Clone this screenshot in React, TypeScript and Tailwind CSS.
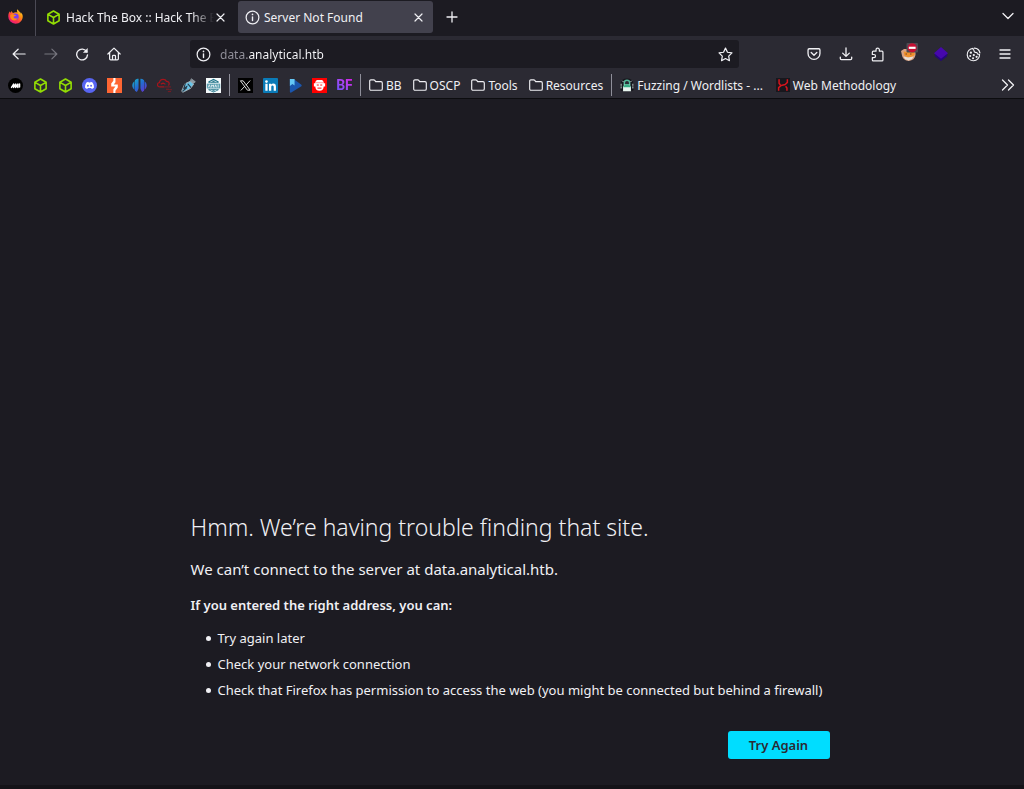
import type { ReactNode } from "react";

type IconProps = { children: ReactNode; className?: string; box?: string };

function Icon({ children, className = "size-[15px]", box = "0 0 16 16" }: IconProps) {
  return (
    <svg
      viewBox={box}
      className={`shrink-0 ${className}`}
      fill="none"
      stroke="currentColor"
      strokeWidth="1.3"
      strokeLinecap="round"
      strokeLinejoin="round"
      aria-hidden="true"
    >
      {children}
    </svg>
  );
}

function FirefoxLogo() {
  return (
    <Icon className="size-[15px]">
      <defs>
        <linearGradient id="fx" x1="1" y1="0" x2="0.2" y2="1">
          <stop offset="0" stopColor="#fff44f" />
          <stop offset="0.35" stopColor="#ff980e" />
          <stop offset="0.7" stopColor="#ff3647" />
          <stop offset="1" stopColor="#e31587" />
        </linearGradient>
      </defs>
      <g stroke="none">
        <path
          fill="url(#fx)"
          d="M15.2 5.6c-.5-1-1.300-2.100-2-2.500.6 1 .8 1.800.9 2.300C13 3 11.200 1.900 9.800.2 9.200 2 9.800 3 10.200 3.700 8 3 6.500 3.500 5.500 4.200 4.700 4 4.300 3.100 4.200 2 3.300 2.500 2.700 3.400 2.400 4.100 1.900 3.700 1.900 2.800 1.900 2.500.9 3.600.3 5.700.3 7.900A7.700 7.700 0 0 0 8 15.700c4.500 0 7.700-3.500 7.700-7.700 0-1-.2-1.800-.5-2.400z"
        />
        <circle cx="7.900" cy="8.300" r="3.500" fill="#7a3cf0" />
        <path fill="#ff8a16" d="M2.500 6.200c1.500-1.200 3-1 4.200-.2.800.1 1.500.2 2 .8-1 1-2.700.8-2.800 2 .8 1.500 3 2 4.500.7-.8 2.300-3.600 3.300-5.800 2.200-2-1-2.700-3.300-2.100-5.500z" />
      </g>
    </Icon>
  );
}

function BoxLogo() {
  return (
    <Icon className="size-[15px] text-[#92dc04]">
      <path strokeWidth="1.700" d="M8 1l6 3.500v7L8 15l-6-3.500v-7zM2.200 4.600L8 8l5.800-3.400M8 8v6.800" />
    </Icon>
  );
}

function InfoIcon() {
  return (
    <Icon>
      <circle cx="8" cy="8" r="6.800" />
      <path d="M8 7.300v4" strokeWidth="1.500" />
      <circle cx="8" cy="4.700" r=".9" fill="currentColor" stroke="none" />
    </Icon>
  );
}

function CloseIcon() {
  return (
    <Icon className="size-[9px]" box="0 0 9 9">
      <path d="M1 1l7 7M8 1l-7 7" strokeWidth="1.200" />
    </Icon>
  );
}

function FolderIcon() {
  return (
    <Icon className="size-[14px]">
      <path d="M.8 12.500v-9c0-.8.500-1.300 1.300-1.300h3.300c.5 0 .9.200 1.200.6l1 1.400h6.100c.9 0 1.500.6 1.500 1.500v6.800c0 .9-.6 1.500-1.500 1.500H2.300c-.9 0-1.500-.6-1.500-1.500z" />
    </Icon>
  );
}

const siteLinks: { name: string; icon: ReactNode }[] = [
  {
    name: "Notes",
    icon: (
      <Icon>
        <circle cx="8" cy="8" r="8" fill="#000" stroke="none" />
        <path d="M3.800 10L6 6.500V10l2.200-3.500V10l2.300-3.500V10M12.300 6.500V9.500" stroke="#fff" strokeWidth="1.600" />
      </Icon>
    ),
  },
  { name: "Hack The Box", icon: <BoxLogo /> },
  { name: "Hack The Box Academy", icon: <BoxLogo /> },
  {
    name: "Discord",
    icon: (
      <Icon>
        <circle cx="8" cy="8" r="8" fill="#5865f2" stroke="none" />
        <path
          fill="#fff"
          stroke="none"
          d="M4.800 4.700l1.900-.6.4.7h1.800l.4-.7 1.900.6c1.200 1.800 1.700 3.600 1.500 5.800-.7.600-1.500.9-2.300 1.100l-.6-1H6.200l-.6 1c-.8-.2-1.600-.5-2.300-1.100-.2-2.200.3-4 1.500-5.800z"
        />
        <circle cx="6.300" cy="8.300" r="1" fill="#5865f2" stroke="none" />
        <circle cx="9.700" cy="8.300" r="1" fill="#5865f2" stroke="none" />
      </Icon>
    ),
  },
  {
    name: "PortSwigger",
    icon: (
      <Icon>
        <path fill="#ff6633" stroke="none" d="M0 0h16v16H0z" />
        <path fill="#fff" stroke="none" d="M6.800 0H9v4.500L7.200 7h4.300v3L9 13.500V16H6.800v-4L9 9H4.500V5.800L6.800 3z" />
      </Icon>
    ),
  },
  {
    name: "Recon",
    icon: (
      <Icon>
        <defs>
          <linearGradient id="wave" x1="0" y1="0" x2="1" y2="1">
            <stop offset="0" stopColor="#16b6c9" />
            <stop offset="0.500" stopColor="#246bd0" />
            <stop offset="1" stopColor="#6a2bd0" />
          </linearGradient>
        </defs>
        <g fill="url(#wave)" stroke="none">
          <path d="M2.600 3.500v9C.8 11 .3 9.500.3 8s.6-3.200 2.300-4.500zM3.100 2.300C4.300 1.200 5.600.8 7 .8v9.700c0 1.500-.7 3-1.800 4.300L3.100 13.500zM9 .8c1.400 0 2.700.5 3.900 1.500v11.200l-2.100 1.300C9.700 13.500 9 12 9 10.500zM13.400 3.500c1.700 1.300 2.300 3 2.300 4.500s-.5 3-2.300 4.500z" />
        </g>
      </Icon>
    ),
  },
  {
    name: "Cloud Security",
    icon: (
      <Icon className="size-[15px] text-[#a5141c]">
        <path d="M7.500 9.500H3C1.300 9.500.5 8.300.5 7.200.5 6 1.400 5 2.600 5c.2-2 1.900-3.500 4-3.500 1.600 0 3 .8 3.600 2.200 1.600-.2 2.800.9 2.800 2.400 0 .6-.2 1-.5 1.400M4.500 6.200l2-.8 2 1" />
        <path d="M9 9.500h5.500M10 12h2.500M13.500 12.500h2M12 14.500h2.500" strokeWidth="1" strokeOpacity="0.7" />
      </Icon>
    ),
  },
  {
    name: "Payload Notes",
    icon: (
      <Icon>
        <path d="M11.300 1l4 3-2 1.500-3-2.300z" fill="#8b98a0" stroke="#a7b3b8" strokeWidth=".7" />
        <path d="M4.500 6L10 3.500l3.500 3-3.200 4.500L4 14.200l-2.200 1-.8-1z" fill="#69c4e8" stroke="#a9b3b9" strokeWidth="1" />
        <path d="M4.500 6L3 11.500l3.500-2.800M2 14l4-3.500M7.500 6.500l3 3.500" stroke="#263847" strokeWidth="1.200" />
      </Icon>
    ),
  },
  {
    name: "Amass",
    icon: (
      <Icon>
        <path fill="#f5fafb" stroke="none" d="M0 0h16v16H0z" />
        <path fill="#1b7187" stroke="none" d="M2.500 3.700L8 .8l5.500 2.900v1.300h-11zM2.500 12h11v.8L8 15.500l-5.500-2.700z" />
        <path fill="#5c9fb0" stroke="none" d="M.8 6h14.400v5.200H.8z" />
        <path stroke="#f5fafb" strokeWidth=".8" d="M2.500 9.700l1-2.500 1 2.500M6 9.700V7.300l1 1.200 1-1.200v2.400M9.500 9.700l.8-2.500.9 2.500M13 7.300v2.400M5 4l3-1.200L11 4M5 13l3 1 3-1" />
      </Icon>
    ),
  },
];

const socialLinks: { name: string; icon: ReactNode }[] = [
  {
    name: "X",
    icon: (
      <Icon>
        <path fill="#000" stroke="none" d="M0 0h16v16H0z" />
        <path stroke="#e5e5e5" strokeWidth="1" strokeLinejoin="miter" d="M3 3h2.500l7.500 10h-2.500zM12.700 3L8.800 7.300M7.200 8.800L3.300 13" />
      </Icon>
    ),
  },
  {
    name: "LinkedIn",
    icon: (
      <Icon>
        <rect width="16" height="16" rx="1" fill="#0a7bb8" stroke="none" />
        <g fill="#fff" stroke="none">
          <circle cx="3.700" cy="3.800" r="1.400" />
          <path d="M2.500 6h2.400v7.500H2.500zM6.400 6h2.300v1c.5-.8 1.300-1.200 2.300-1.200 2 0 2.800 1.200 2.800 3.500v4.200h-2.400V9.700c0-1-.3-1.800-1.200-1.800-1 0-1.400.7-1.400 1.800v3.800H6.400z" />
        </g>
      </Icon>
    ),
  },
  {
    name: "Intigriti",
    icon: (
      <Icon>
        <path fill="#1b56ad" stroke="none" d="M2 1h4l8.300 6.300c.5.400.5 1 0 1.400L3.500 15.500C2.800 15.900 2 15.500 2 14.700z" />
        <path fill="#65c7f5" stroke="none" d="M2 1h5v7L4.700 6.500 2 8.500z" />
      </Icon>
    ),
  },
  {
    name: "Root Me",
    icon: (
      <Icon>
        <path fill="#f00" stroke="none" d="M0 0h16v16H0z" />
        <path
          fill="#fff"
          stroke="none"
          d="M5.500 2h5c1.500.5 2 2 2 3.500h1.500v3.500h-1.500c0 2.800-1.700 4.700-4.500 4.700S3.500 11.800 3.500 9H2V5.500h1.500C3.500 4 4 2.500 5.500 2z"
        />
        <path stroke="#f00" strokeWidth="1" d="M5.500 7.500h1.300M9.200 7.500h1.300M6.300 10.800h3.400" />
        <path stroke="#ff8080" strokeWidth=".8" d="M4.500 5h7" />
      </Icon>
    ),
  },
  {
    name: "Bug Forum",
    icon: (
      <span className="flex size-[15px] items-center justify-center bg-linear-to-tr from-[#5b53ff] to-[#e000e8] bg-clip-text font-[Roboto,sans-serif] text-[14px] leading-[15px] font-bold text-transparent">
        BF
      </span>
    ),
  },
];

const folders = ["BB", "OSCP", "Tools", "Resources"];

const suggestions = [
  "Try again later",
  "Check your network connection",
  "Check that Firefox has permission to access the web (you might be connected but behind a firewall)",
];

function Separator() {
  return <div className="h-[22px] w-px shrink-0 bg-[#8f8f9a]" />;
}

function IconButton({ label, children }: { label: string; children: ReactNode }) {
  return (
    <button type="button" aria-label={label} className="flex size-[16px] shrink-0 items-center justify-center">
      {children}
    </button>
  );
}

function TabStrip() {
  return (
    <header className="flex h-[36px] items-start bg-[#1c1b22]">
      <div className="flex h-full w-[36px] shrink-0 items-center border-r border-[#4b4a55] pb-[3px] pl-[8px]">
        <FirefoxLogo />
      </div>
      <div className="mt-[1px] ml-[4px] flex h-[32px] w-[195px] shrink-0 items-center pl-[6px]">
        <BoxLogo />
        <span className="ml-[5px] w-[148px] overflow-hidden mask-r-from-85% mask-r-to-100% whitespace-nowrap">
          Hack The Box :: Hack The Box
        </span>
        <button type="button" aria-label="Close Hack The Box" className="ml-[2px]">
          <CloseIcon />
        </button>
      </div>
      <div className="mt-[1px] ml-[3px] flex h-[32px] w-[195px] shrink-0 items-center rounded-[3px] bg-[#42414d] pr-[10px] pl-[7px]">
        <InfoIcon />
        <span className="ml-[4px] flex-1">Server Not Found</span>
        <button type="button" aria-label="Close Server Not Found">
          <CloseIcon />
        </button>
      </div>
      <div className="ml-[11px] flex h-[34px] items-center">
        <IconButton label="New tab">
          <Icon className="size-[12px]" box="0 0 12 12">
            <path d="M6 1v10M1 6h10" />
          </Icon>
        </IconButton>
      </div>
      <div className="mr-[8px] ml-auto flex h-[32px] items-center">
        <IconButton label="List all tabs">
          <Icon className="size-[12px]" box="0 0 12 12">
            <path d="M1 3.500l5 5 5-5" />
          </Icon>
        </IconButton>
      </div>
    </header>
  );
}

function NavBar() {
  return (
    <nav className="flex h-[36px] items-center bg-[#2b2a33]">
      <div className="w-[190px] shrink-0 pl-[11px]">
        <div className="flex w-[111px] items-center justify-between">
          <IconButton label="Back">
            <Icon className="size-[14px]">
              <path d="M15 8H1.500M7 2.500L1.300 8 7 13.500" strokeWidth="1.400" />
            </Icon>
          </IconButton>
          <IconButton label="Forward">
            <Icon className="size-[14px] text-[#77767f]">
              <path d="M1 8h13.500M9 2.500L14.700 8 9 13.500" />
            </Icon>
          </IconButton>
          <IconButton label="Reload">
            <Icon className="size-[14px]">
              <path d="M13.500 5.500A6.200 6.200 0 1 0 14.300 9" strokeWidth="1.500" />
              <path d="M14.500 1v5.500H9z" fill="currentColor" stroke="none" />
            </Icon>
          </IconButton>
          <IconButton label="Home">
            <Icon className="size-[14px]">
              <path
                strokeWidth="1.400"
                d="M1 8l7-6.700L15 8M3 6.500v7c0 .7.400 1.200 1.200 1.200h7.600c.8 0 1.200-.5 1.200-1.200v-7M6.300 14.500v-4c0-.6.4-1 1-1h1.400c.6 0 1 .4 1 1v4"
              />
            </Icon>
          </IconButton>
        </div>
      </div>
      <div className="flex h-[28px] max-w-[549px] flex-1 items-center rounded-[3px] bg-[#1c1b22] px-[6px]">
        <InfoIcon />
        <input
          type="text"
          aria-label="Address"
          defaultValue="data.analytical.htb"
          className="ml-[9px] min-w-0 flex-1 bg-[linear-gradient(90deg,#92919b_28px,#fbfbfe_28px)] bg-clip-text text-transparent caret-white outline-none"
        />
        <IconButton label="Bookmark this page">
          <Icon>
            <path d="M8 1.200l2.100 4.400 4.800.7-3.500 3.400.8 4.900L8 12.300l-4.200 2.300.8-4.900L1.100 6.300l4.800-.7z" />
          </Icon>
        </IconButton>
      </div>
      <div className="mr-[11px] ml-auto flex w-[207px] shrink-0 items-center justify-between">
        <IconButton label="Save to Pocket">
          <Icon className="size-[14px]">
            <path d="M2.500 2h11c.8 0 1.300.5 1.300 1.300v4a6.800 6.800 0 0 1-13.600 0v-4C1.200 2.500 1.700 2 2.500 2zM4.800 6.300L8 9.400l3.200-3.100" strokeWidth="1.500" />
          </Icon>
        </IconButton>
        <IconButton label="Downloads">
          <Icon className="size-[14px]">
            <path strokeWidth="1.500" d="M8 1v9.500M4.200 7L8 10.700 11.800 7M1.500 11.500v1.700c0 .8.500 1.300 1.300 1.300h10.400c.8 0 1.300-.5 1.300-1.300v-1.700" />
          </Icon>
        </IconButton>
        <IconButton label="Extensions">
          <Icon>
            <path d="M3.500 14.800h9.300c.6 0 1-.4 1-1V5.500c0-.6-.4-1-1-1H10V3a1.800 1.800 0 0 0-3.600 0v1.500H3.500c-.6 0-1 .4-1 1V8h1.700a1.700 1.700 0 0 1 0 3.400H2.500v2.400c0 .6.4 1 1 1z" />
          </Icon>
        </IconButton>
        <IconButton label="FoxyProxy, disabled">
          <svg viewBox="0 0 18 18" className="mb-[4px] size-[18px] shrink-0" aria-hidden="true">
            <path d="M1 8l3-2h9l2.500 3v3c-.5 3.500-3 5.500-6.500 6-3.800-.3-6.500-2.500-7-5.500z" fill="#d9a283" />
            <path d="M3.500 8.500l4 .5 6-1 1.500 3-2 2.500-4 1-4.500-1.500z" fill="#f0912d" />
            <path d="M3.500 13.500l4.500 1 5.500-1-1.500 2.500-3.500 1.500-3.500-1.500z" fill="#eadfd6" />
            <path d="M5.500 11h1.500M10 11h1.500" stroke="#7a4426" />
            <rect x="6.500" width="11.500" height="9.500" rx="1" fill="#4c4b53" />
            <circle cx="12.200" cy="4.800" r="4.500" fill="#c60e33" />
            <path d="M8.800 3.700h6.800v2.200H8.800z" fill="#fff" />
          </svg>
        </IconButton>
        <IconButton label="Wappalyzer">
          <Icon className="size-[14px]">
            <g stroke="none">
              <path fill="#25067c" d="M1 7l7 6 7-6v3.500L8 16l-7-5.500z" />
              <path fill="#4608ad" d="M8 0l8 7-8 6.500L0 7z" />
            </g>
          </Icon>
        </IconButton>
        <IconButton label="Cookie editor">
          <Icon>
            <path d="M7.500 1.500A6.600 6.600 0 1 0 14.500 8c-1.600.1-2.800-.7-3-2.200-2 .3-3.300-.7-3-2.400-.7-.4-1-1.100-1-1.900z" strokeWidth="1.200" />
            <path d="M9 1.300c3 .2 5.300 2.200 5.800 5" />
            <g fill="currentColor" stroke="none">
              <circle cx="5.200" cy="6" r="1.200" />
              <circle cx="4.500" cy="9.600" r="1.100" />
              <circle cx="8.300" cy="8.600" r="1.200" />
              <circle cx="7.500" cy="12" r="1.100" />
              <circle cx="11.300" cy="10.500" r="1.200" />
            </g>
          </Icon>
        </IconButton>
        <IconButton label="Open application menu">
          <Icon className="size-[12px]" box="0 0 12 12">
            <path d="M1 2h10M1 6h10M1 10h10" />
          </Icon>
        </IconButton>
      </div>
    </nav>
  );
}

function BookmarksBar() {
  return (
    <nav
      aria-label="Bookmarks"
      className="flex h-[27px] items-center border-b border-[#0c0c0f] bg-[#2b2a33] whitespace-nowrap"
    >
      <div className="ml-[8px] flex w-[213px] shrink-0 items-center justify-between">
        {siteLinks.map((link) => (
          <a key={link.name} href="#" aria-label={link.name}>
            {link.icon}
          </a>
        ))}
      </div>
      <div className="mx-[8px]">
        <Separator />
      </div>
      <div className="flex w-[114px] shrink-0 items-center justify-between">
        {socialLinks.map((link) => (
          <a key={link.name} href="#" aria-label={link.name}>
            {link.icon}
          </a>
        ))}
      </div>
      <div className="mx-[8px]">
        <Separator />
      </div>
      <div className="flex shrink-0 items-center gap-[11px]">
        {folders.map((name) => (
          <button key={name} type="button" className="flex items-center gap-[3px]">
            <FolderIcon />
            {name}
          </button>
        ))}
      </div>
      <div className="mx-[8px]">
        <Separator />
      </div>
      <div className="flex shrink-0 items-center gap-[13px]">
        <a href="#" className="flex items-center gap-[3px]">
          <Icon className="size-[14px]">
            <path d="M2 13V7c.5-3 3-5 6-5s5.500 2 6 5v6" stroke="#15161c" strokeWidth="3" />
            <path d="M1.300 7v5M14.700 7v5M3 3.500l1 1M13 3.500l-1 1" stroke="#d9e4e1" strokeWidth="1" strokeDasharray="1.500 1.500" />
            <path d="M5 8V5.500a3 3 0 0 1 6 0V8" stroke="#54b99a" strokeWidth="1.600" />
            <path d="M3.500 10l2-3h5l2 3v5h-9z" fill="#e8f5ef" stroke="none" />
            <path d="M4 9.500l2-2.300h4l2 2.300v1H4z" fill="#37ad84" stroke="none" />
          </Icon>
          Fuzzing / Wordlists - ...
        </a>
        <a href="#" className="flex items-center gap-[3px]">
          <Icon className="size-[14px]">
            <path fill="#18171d" stroke="none" d="M0 0h16v16H0z" />
            <path stroke="#d8141c" strokeWidth="1.700" strokeLinecap="butt" d="M3.500 1.500V6L5 8M3 14.500V11l3-2.500 4.500-1L13 5V1.500M11 9.500l1.500 2v3" />
          </Icon>
          Web Methodology
        </a>
      </div>
      <div className="mr-[8px] ml-auto">
        <IconButton label="Show more bookmarks">
          <Icon className="size-[14px]" box="0 0 14 14">
            <path d="M1.500 2l5 5-5 5M7.500 2l5 5-5 5" />
          </Icon>
        </IconButton>
      </div>
    </nav>
  );
}

export default function App() {
  return (
    <div className="flex min-h-screen flex-col bg-[#1c1b22] font-['Noto_Sans',sans-serif] text-[12px] leading-[19px] text-[#f0f0f4]">
      <TabStrip />
      <NavBar />
      <BookmarksBar />
      <main className="flex flex-1 flex-col justify-end border-b-4 border-[#141318] pb-[26px]">
        <div className="mx-auto w-full max-w-[643px] text-[13px]">
          <h1 className="text-[23px] leading-[34px] font-light">Hmm. We’re having trouble finding that site.</h1>
          <p className="mt-[13px] text-[15px] leading-[24px]">
            We can’t connect to the server at data.analytical.htb.
          </p>
          <p className="mt-[13px] leading-[22px] font-semibold">If you entered the right address, you can:</p>
          <ul className="mt-[9px] pl-[15px] leading-[26px]">
            {suggestions.map((text) => (
              <li
                key={text}
                className="flex items-center gap-[7px] before:size-[5px] before:shrink-0 before:rounded-full before:bg-current"
              >
                {text}
              </li>
            ))}
          </ul>
          <div className="mt-[28px] flex justify-end pr-[4px]">
            <button
              type="button"
              className="h-[28px] w-[102px] rounded-[3px] bg-[#00ddff] font-semibold text-[#2b2a33]"
            >
              Try Again
            </button>
          </div>
        </div>
      </main>
    </div>
  );
}
